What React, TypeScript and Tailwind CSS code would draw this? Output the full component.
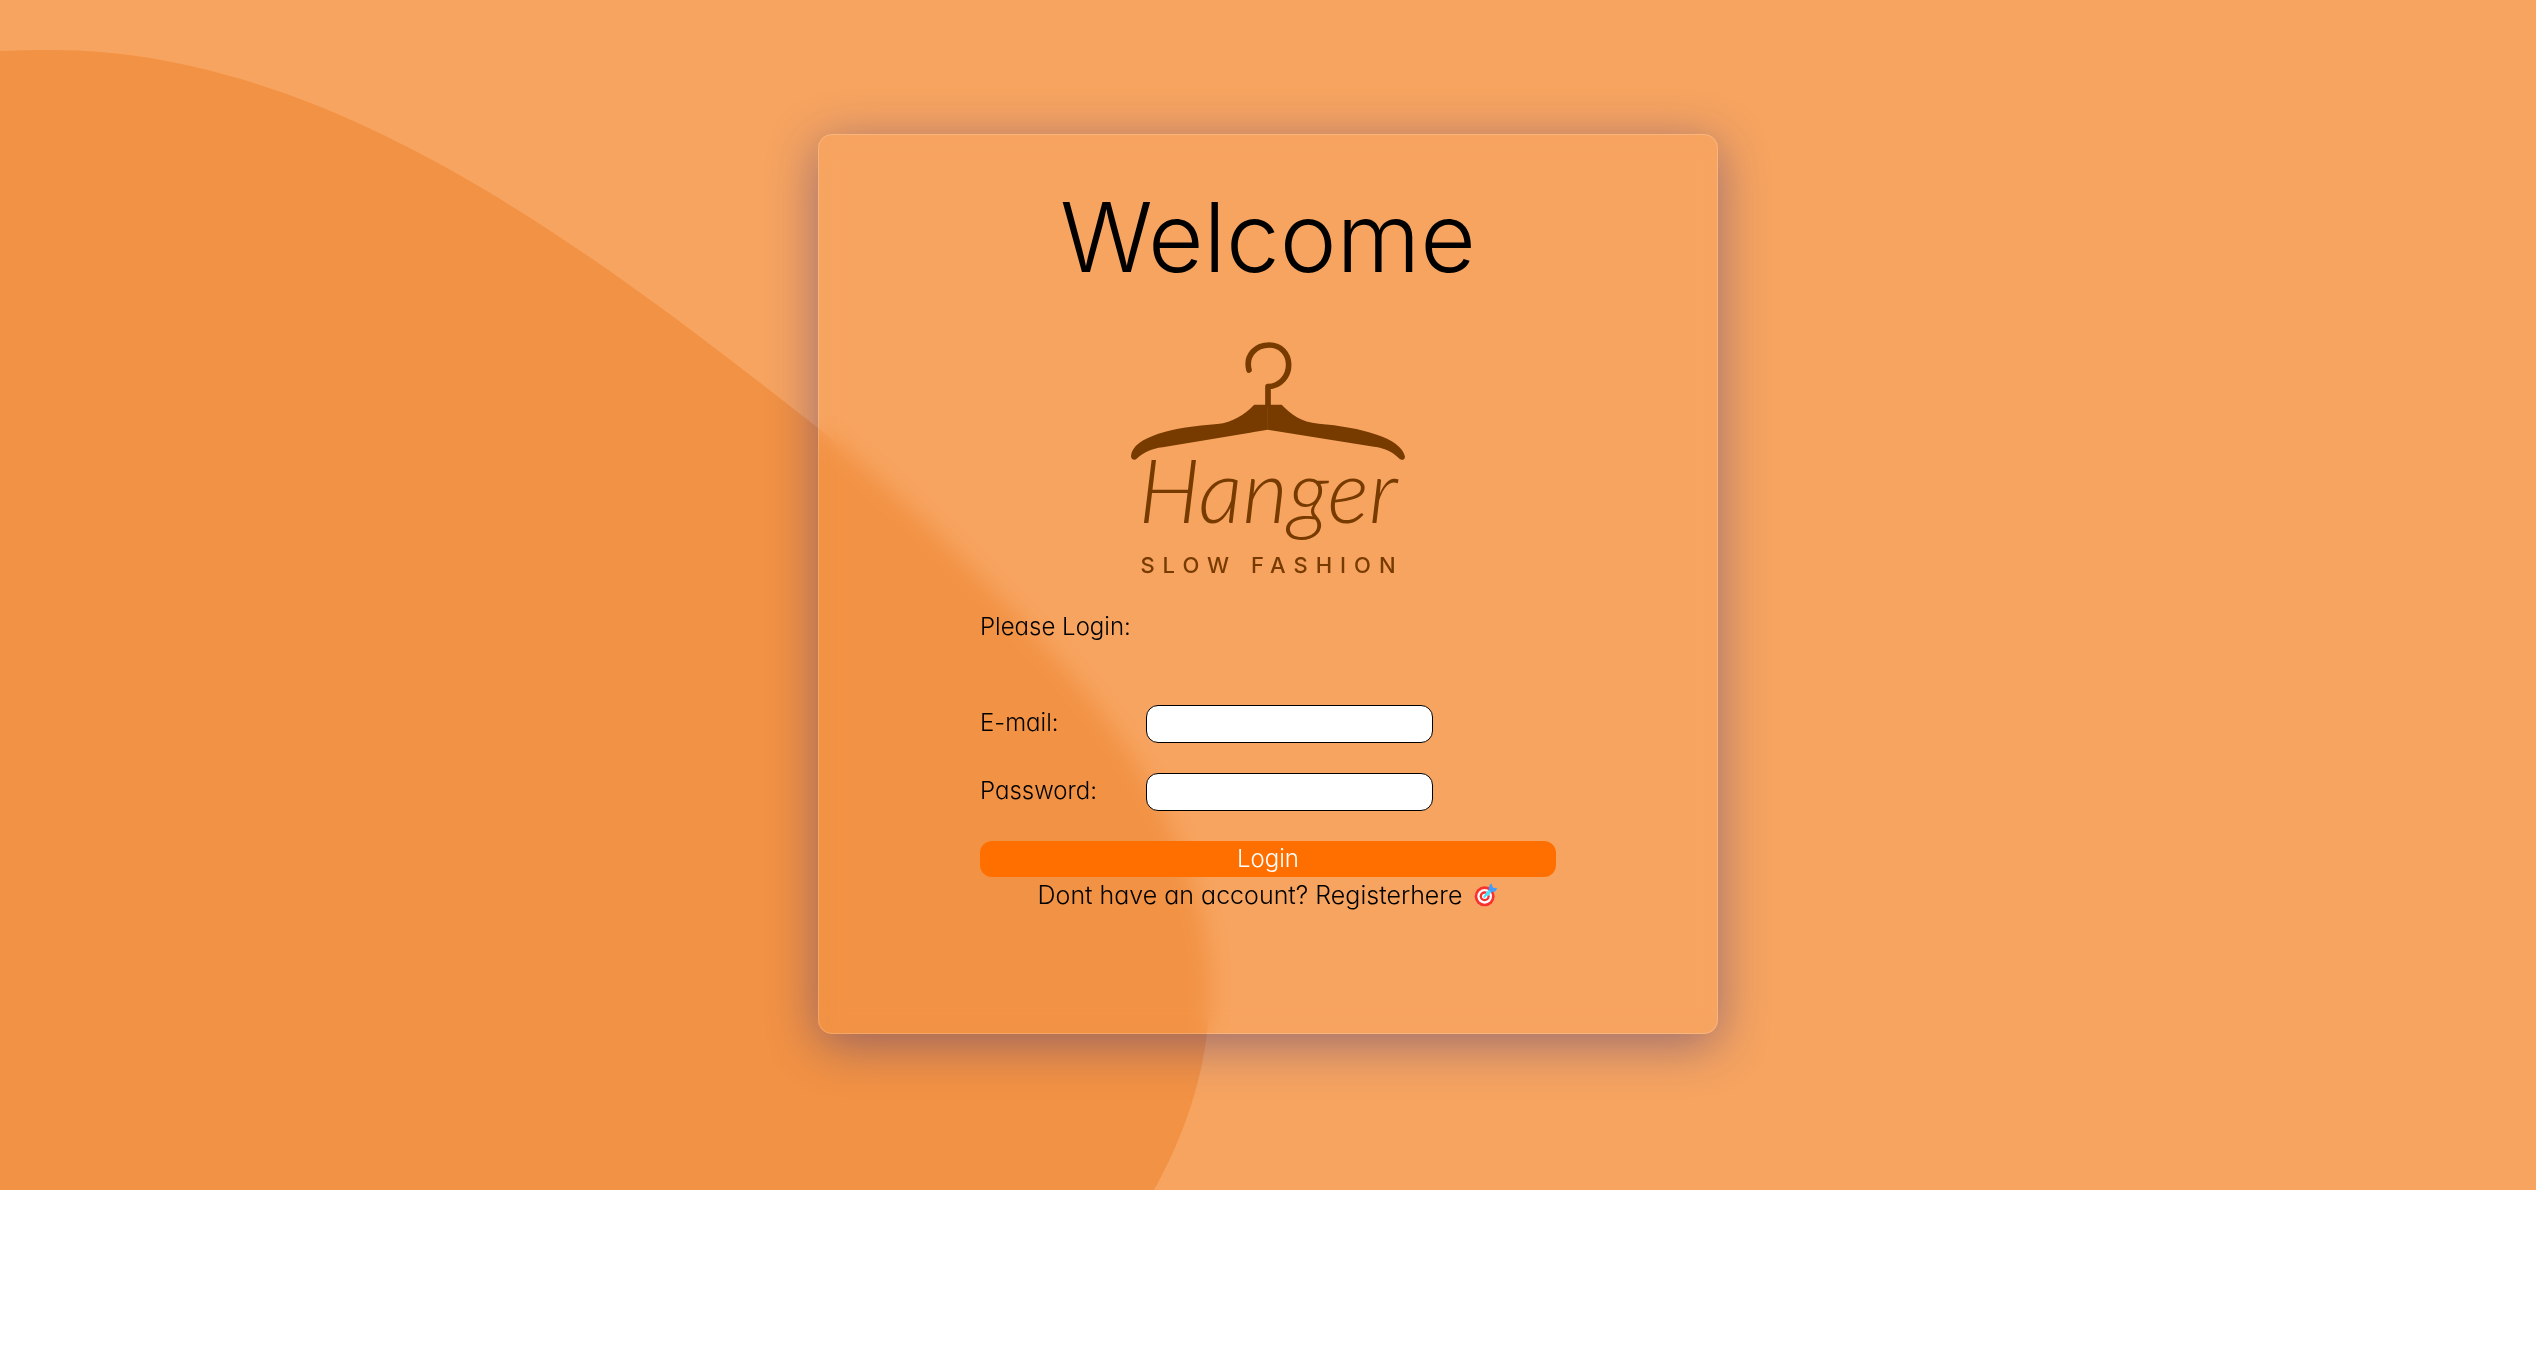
function Backdrop() {
  return (
    <svg
      aria-hidden="true"
      viewBox="0 0 2536 1190"
      preserveAspectRatio="none"
      className="absolute inset-0 h-full w-full"
    >
      <path
        fill="#f29244"
        d="M0 51C20 50 36 50 51 50C330 50 590 249 818 428C885 481 945 540 995 592C1060 660 1120 725 1160 805C1190 865 1210 925 1210 985C1210 1058 1190 1125 1154 1190H0Z"
      />
    </svg>
  );
}

function Logo() {
  return (
    <figure className="flex flex-col items-center text-[#773b00]">
      <svg aria-hidden="true" viewBox="90 60 828 360" className="h-[120px] w-[276px]">
        <path
          d="M447 147C436 104 466 72 508 72C543 72 566 99 566 131C566 166 541 195 504 197V256"
          fill="none"
          stroke="currentColor"
          strokeWidth="17"
          strokeLinecap="round"
          strokeLinejoin="round"
        />
        <path
          fill="currentColor"
          d="M463 251H545C573 279 602 303 656 308C780 318 905 350 915 407C914 418 903 419 897 412C876 391 854 381 822 377L503 326L188 379C154 383 133 394 110 413C104 419 93 416 93 405C98 347 220 318 352 309C402 304 436 278 463 251Z"
        />
        <path d="M503 258V325" stroke="#8a4a10" strokeWidth="2" />
      </svg>
      <figcaption className="flex flex-col items-center">
        <span className="font-[Lato,sans-serif] text-[88px] leading-[56px] font-light italic">
          Hanger
        </span>
        <span className="mt-9 pl-2 text-[22px] leading-6 font-medium tracking-[8px]">
          SLOW FASHION
        </span>
      </figcaption>
    </figure>
  );
}

function DartIcon() {
  return (
    <svg role="img" aria-label="Bullseye" viewBox="0 0 72 72" className="h-6 w-6">
      <circle cx="32" cy="40" r="30" fill="#f8312f" />
      <circle cx="32" cy="40" r="22" fill="#fff" />
      <circle cx="32" cy="40" r="15" fill="#f8312f" />
      <circle cx="32" cy="40" r="8" fill="#fff" />
      <path d="M31 41L48 22" stroke="#50e2ff" strokeWidth="7" strokeLinecap="round" />
      <path fill="#50e2ff" d="M34 40L36 28L46 20L53 26L44 38Z" />
      <path fill="#3f9dff" d="M44 21L46 8L52 1L57 14L70 16L64 25L52 28Z" />
    </svg>
  );
}

const fields = [
  { id: "email", label: "E-mail:", type: "email" },
  { id: "password", label: "Password:", type: "password" },
];

export default function App() {
  return (
    <div className="min-h-screen bg-white font-[Inter,sans-serif] text-2xl leading-9 font-light text-black [font-feature-settings:'cv11']">
      <main className="relative flex justify-center bg-[#f7a460] pt-[134px] pb-[156px]">
        <Backdrop />
        <section className="relative flex w-full max-w-[900px] flex-col items-center rounded-[14px] border border-white/20 px-[161px] pt-12 pb-[120px] shadow-[0_10px_50px_0_rgba(31,38,135,0.43)] backdrop-blur-[12px]">
          <h1 className="text-8xl leading-[108px]">Welcome</h1>
          <div className="mt-[50px]">
            <Logo />
          </div>
          <form className="mt-8 flex w-full flex-col" onSubmit={(e) => e.preventDefault()}>
            <p>Please Login:</p>
            <div className="mt-[60px] flex flex-col gap-[30px]">
              {fields.map((f) => (
                <div key={f.id} className="flex">
                  <label htmlFor={f.id} className="w-[166px]">
                    {f.label}
                  </label>
                  <input
                    id={f.id}
                    type={f.type}
                    className="h-[38px] w-[287px] rounded-xl border border-black bg-white px-2"
                  />
                </div>
              ))}
              <button type="submit" className="rounded-xl bg-[#ff6f00] text-white">
                Login
              </button>
            </div>
            <p className="flex items-center justify-center gap-3 text-[25px] leading-9">
              <span>
                Dont have an account? Register<a href="#register">here</a>
              </span>
              <DartIcon />
            </p>
          </form>
        </section>
      </main>
    </div>
  );
}
